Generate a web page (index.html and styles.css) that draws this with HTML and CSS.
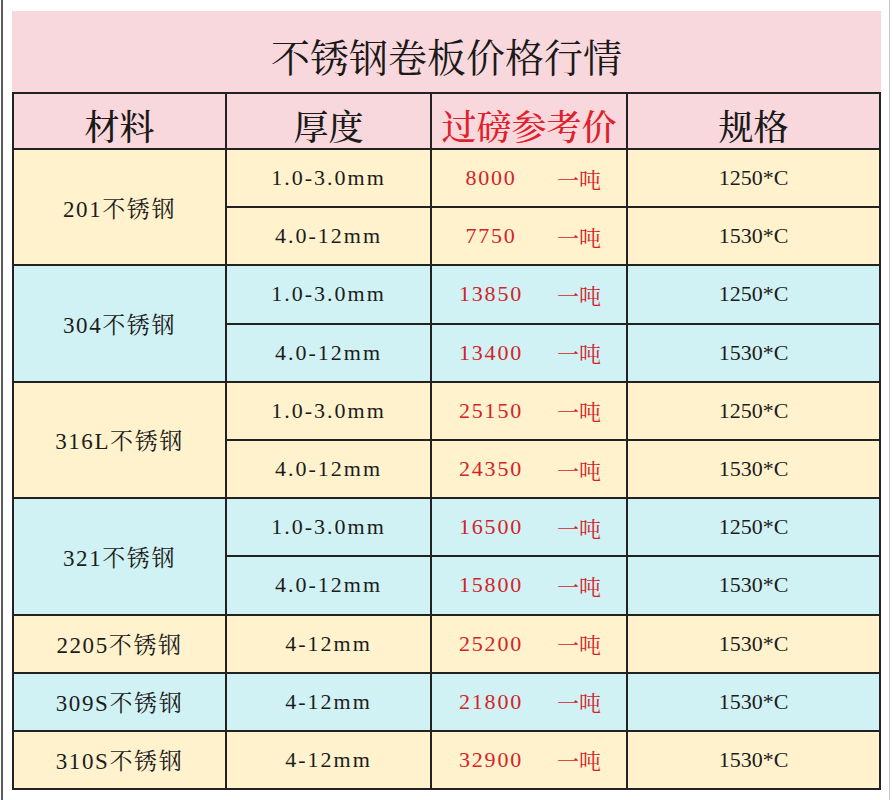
FILE: index.html
```html
<!DOCTYPE html>
<html lang="zh-CN">
<head>
<meta charset="utf-8">
<title>不锈钢卷板价格行情</title>
<link rel="stylesheet" href="styles.css">
</head>
<body>
<div class="frame">
  <div class="title">不锈钢卷板价格行情</div>
  <div class="grid">
    <div class="hd">材料</div>
    <div class="hd">厚度</div>
    <div class="hd red">过磅参考价</div>
    <div class="hd">规格</div>

    <div class="mat y span2">201不锈钢</div>
    <div class="thk y">1.0-3.0mm</div>
    <div class="price y"><span class="num">8000</span><span class="unit">一吨</span></div>
    <div class="spec y">1250*C</div>
    <div class="thk y">4.0-12mm</div>
    <div class="price y"><span class="num">7750</span><span class="unit">一吨</span></div>
    <div class="spec y">1530*C</div>

    <div class="mat c span2">304不锈钢</div>
    <div class="thk c">1.0-3.0mm</div>
    <div class="price c"><span class="num">13850</span><span class="unit">一吨</span></div>
    <div class="spec c">1250*C</div>
    <div class="thk c">4.0-12mm</div>
    <div class="price c"><span class="num">13400</span><span class="unit">一吨</span></div>
    <div class="spec c">1530*C</div>

    <div class="mat y span2">316L不锈钢</div>
    <div class="thk y">1.0-3.0mm</div>
    <div class="price y"><span class="num">25150</span><span class="unit">一吨</span></div>
    <div class="spec y">1250*C</div>
    <div class="thk y">4.0-12mm</div>
    <div class="price y"><span class="num">24350</span><span class="unit">一吨</span></div>
    <div class="spec y">1530*C</div>

    <div class="mat c span2">321不锈钢</div>
    <div class="thk c">1.0-3.0mm</div>
    <div class="price c"><span class="num">16500</span><span class="unit">一吨</span></div>
    <div class="spec c">1250*C</div>
    <div class="thk c">4.0-12mm</div>
    <div class="price c"><span class="num">15800</span><span class="unit">一吨</span></div>
    <div class="spec c">1530*C</div>

    <div class="mat y">2205不锈钢</div>
    <div class="thk y">4-12mm</div>
    <div class="price y"><span class="num">25200</span><span class="unit">一吨</span></div>
    <div class="spec y">1530*C</div>

    <div class="mat c">309S不锈钢</div>
    <div class="thk c">4-12mm</div>
    <div class="price c"><span class="num">21800</span><span class="unit">一吨</span></div>
    <div class="spec c">1530*C</div>

    <div class="mat y">310S不锈钢</div>
    <div class="thk y">4-12mm</div>
    <div class="price y"><span class="num">32900</span><span class="unit">一吨</span></div>
    <div class="spec y">1530*C</div>
  </div>
</div>
</body>
</html>
```
FILE: styles.css
```css
html, body {
  margin: 0;
  padding: 0;
  background: #ffffff;
}

.frame {
  box-sizing: border-box;
  margin-left: 1px;
  width: 889px;
  height: 800px;
  border-left: 2px solid #5c5c5c;
  border-right: 1px solid #c9c9c9;
  padding: 11px 0 0 9px;
  color: #1c1c1c;
  font-family: "Liberation Serif", "Noto Serif CJK SC", "Noto Sans CJK SC", serif;
}

.title {
  width: 869px;
  height: 81px;
  box-sizing: border-box;
  padding-top: 6px;
  background: #f9d8dd;
  display: flex;
  align-items: center;
  justify-content: center;
  font-family: "Noto Serif CJK SC", "Noto Sans CJK SC", serif;
  font-size: 39px;
  font-weight: 400;
  color: #1a1a1a;
}

.grid {
  width: 869px;
  box-sizing: border-box;
  padding: 2px;
  background: #222222;
  display: grid;
  grid-template-columns: 211px 203px 194px 251px;
  grid-template-rows: 54px;
  grid-auto-rows: 56.2px;
  gap: 2px;
}

.grid > div {
  display: flex;
  align-items: center;
  justify-content: center;
}

.hd {
  background: #f9d8dd;
  font-family: "Noto Serif CJK SC", "Noto Sans CJK SC", serif;
  font-size: 35px;
  font-weight: 500;
  padding-top: 7px;
  box-sizing: border-box;
  color: #1a1a1a;
}

.hd.red {
  color: #e0202a;
}

.y {
  background: #fff2cd;
}

.c {
  background: #d1f2f4;
}

.span2 {
  grid-row: span 2;
}

.mat {
  font-size: 23px;
  letter-spacing: 1.6px;
}

.thk {
  font-size: 22px;
  letter-spacing: 2px;
}

.grid > .price {
  justify-content: flex-start;
  color: #d42328;
}

.num {
  margin-left: 15px;
  width: 88px;
  text-align: center;
  font-size: 22px;
  letter-spacing: 1.8px;
}

.unit {
  margin-left: 22px;
  font-family: "Noto Serif CJK SC", "Noto Sans CJK SC", serif;
  font-size: 22px;
}

.spec {
  font-size: 22px;
}
```
